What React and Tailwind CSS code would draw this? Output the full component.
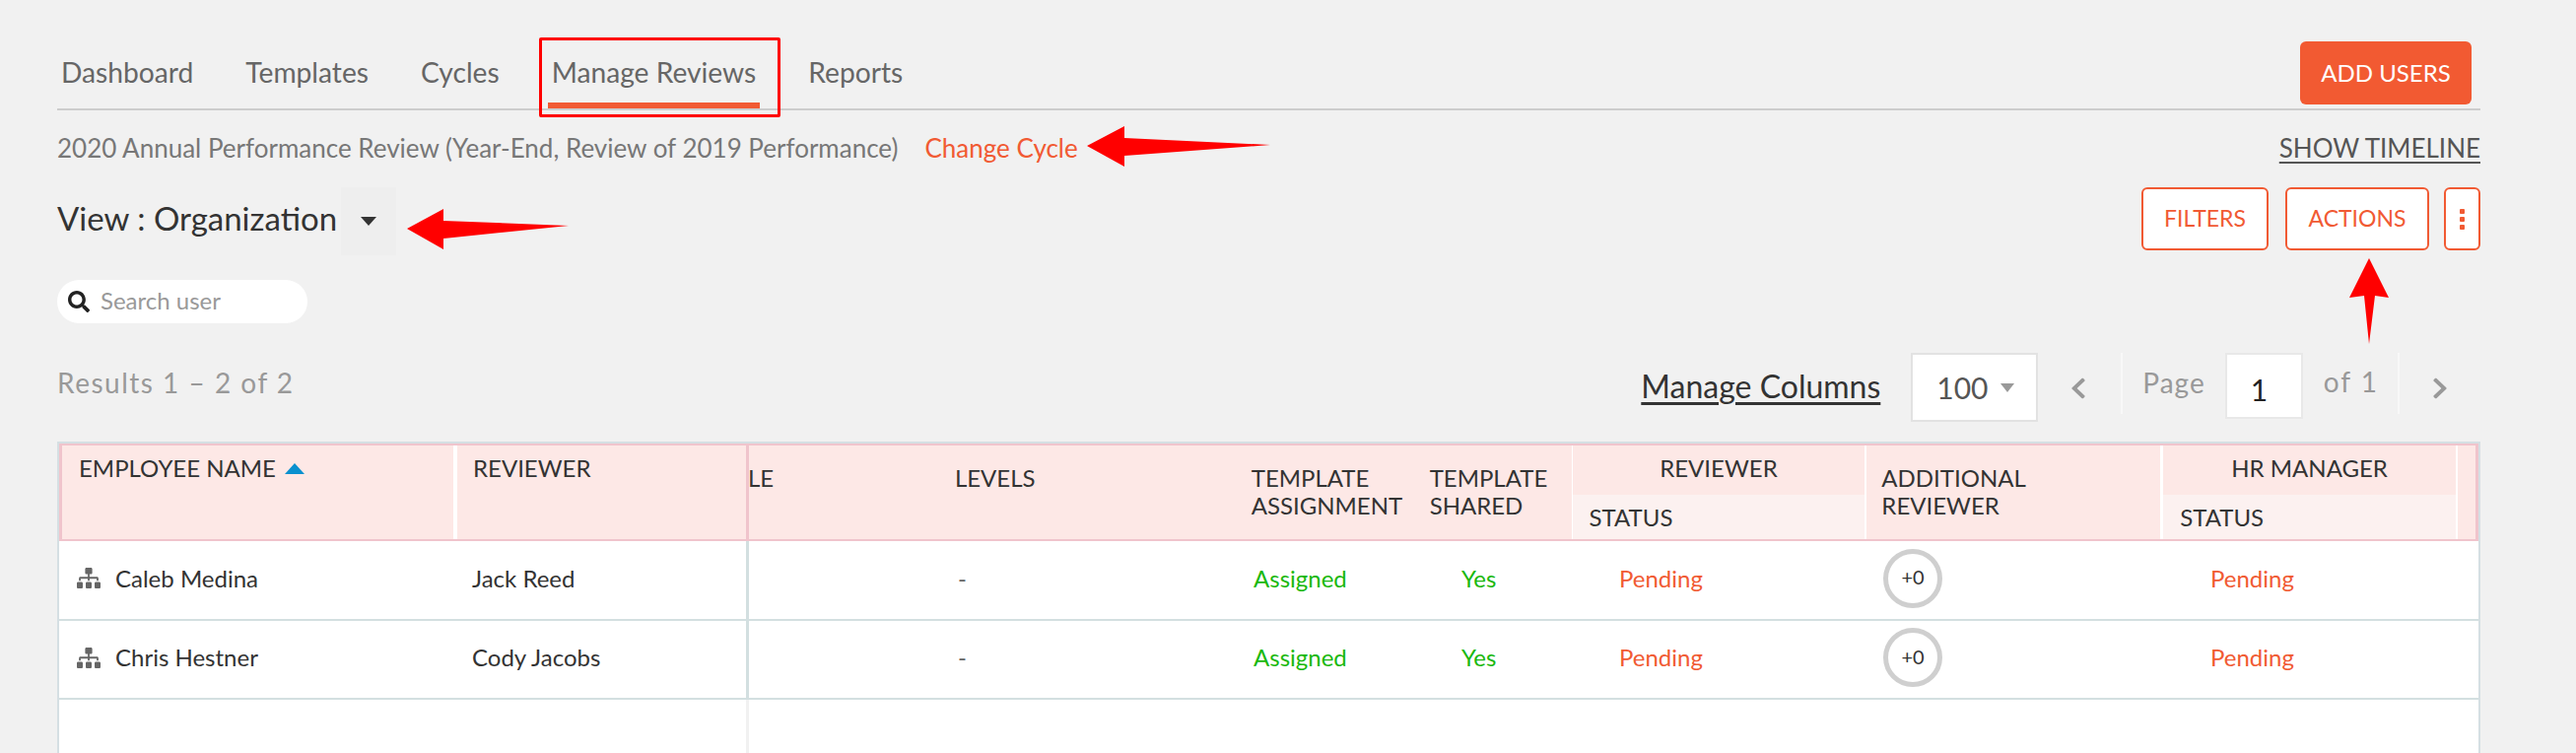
import { FaSitemap, FaSearch, FaChevronLeft, FaChevronRight } from 'react-icons/fa';

const tabs = ['Dashboard', 'Templates', 'Cycles', 'Manage Reviews', 'Reports'];

const people = [
  { name: 'Caleb Medina', reviewer: 'Jack Reed', height: 'h-[81px]' },
  { name: 'Chris Hestner', reviewer: 'Cody Jacobs', height: 'h-[80px]' },
];

// Rote Markierungen aus dem Screenshot, liegen frei über der Seite
function Annotations() {
  return (
    <>
      <div className="absolute left-[547px] top-[38px] w-[245px] h-[81px] border-[3px] border-[#f00] rounded-[2px]" />
      <svg className="absolute left-0 top-0 pointer-events-none" width="2614" height="764">
        <path d="M1103 148 L1141 128 L1141 140 L1289 147 L1141 158 L1141 169 Z" fill="#f00" />
        <path d="M413 232 L450 212 L450 224 L577 229 L450 242 L450 253 Z" fill="#f00" />
        <path d="M2404 262 L2424 302 L2410 300 L2404 349 L2399 300 L2384 302 Z" fill="#f00" />
      </svg>
    </>
  );
}

function Nav() {
  return (
    <div className="flex justify-between h-[112px] border-b-2 border-[#cdcdcd]">
      <div className="flex gap-[45px] h-[110px]">
        {tabs.map((t) => (
          <div
            key={t}
            className={`px-[4px] pt-[53px] text-[28.2px] leading-[40px] text-[#666] border-b-[6px] ${t === 'Manage Reviews' ? 'border-[#f15a33]' : 'border-transparent'}`}
          >
            {t}
          </div>
        ))}
      </div>
      <button className="mt-[42px] mr-[9px] w-[174px] h-[64px] rounded-[6px] bg-[#f25a32] text-white text-[24px]">ADD USERS</button>
    </div>
  );
}

function Outline({ children, className }) {
  return (
    <button className={`h-[64px] flex items-center justify-center bg-white border-2 border-[#f15a33] rounded-[6px] text-[#f15a33] text-[23px] ${className}`}>
      {children}
    </button>
  );
}

function Toolbar() {
  return (
    <>
      <div className="flex justify-between items-center h-[36px] mt-[20px] text-[26px]">
        <div className="flex gap-[27px]">
          <span className="text-[#777]">2020 Annual Performance Review (Year-End, Review of 2019 Performance)</span>
          <span className="text-[#f15a33]">Change Cycle</span>
        </div>
        <span className="text-[#555] underline underline-offset-4">SHOW TIMELINE</span>
      </div>
      <div className="flex justify-between items-start mt-[22px] h-[69px]">
        <div className="flex">
          <div className="w-[283px] whitespace-nowrap text-[33px] leading-[62px] text-[#333]">View : Organization</div>
          <div className="ml-[5px] w-[56px] h-[69px] bg-[#eeeeee] flex items-center justify-center">
            <div className="w-0 h-0 border-x-[8px] border-x-transparent border-t-[9px] border-t-[#333]" />
          </div>
        </div>
        <div className="flex gap-[17px]">
          <Outline className="w-[129px] pb-[2px]">FILTERS</Outline>
          <Outline className="w-[146px] pb-[2px]">ACTIONS</Outline>
          <Outline className="w-[37px] -ml-[2px] flex-col gap-[3px]">
            <span className="w-[5px] h-[5px] bg-[#f15a33] rounded-[1px]" />
            <span className="w-[5px] h-[5px] bg-[#f15a33] rounded-[1px]" />
            <span className="w-[5px] h-[5px] bg-[#f15a33] rounded-[1px]" />
          </Outline>
        </div>
      </div>
      <div className="mt-[25px] w-[254px] h-[44px] bg-white rounded-full flex items-center pl-[11px] gap-[11px]">
        <FaSearch className="w-[22px] h-[22px] text-[#222]" />
        <span className="text-[24px] leading-[30px] pb-[2px] text-[#999]">Search user</span>
      </div>
      <div className="flex justify-between items-start mt-[30px] h-[70px]">
        <div className="mt-[13px] text-[28px] leading-[34px] tracking-[1.5px] text-[#999]">Results 1 – 2 of 2</div>
        <div className="flex items-start pr-[33px]">
          <span className="mt-[14px] text-[32px] leading-[40px] text-[#333] underline underline-offset-4">Manage Columns</span>
          <div className="ml-[31px] w-[129px] h-[70px] bg-white border-2 border-[#e2e2e2] flex items-center pl-[24px] gap-[12px] text-[30px] text-[#555]">
            100
            <div className="w-0 h-0 border-x-[7px] border-x-transparent border-t-[9px] border-t-[#999]" />
          </div>
          <div className="ml-[33px] mt-[24px] w-[16px]"><FaChevronLeft preserveAspectRatio="none" className="w-[16px] h-[24px] text-[#999]" /></div>
          <div className="ml-[35px] w-[2px] h-[62px] bg-[#f8f8f8]" />
          <span className="ml-[20px] mt-[10px] text-[28px] leading-[40px] text-[#999] tracking-[1px]">Page</span>
          <div className="ml-[20px] w-[79px] h-[67px] bg-white border-2 border-[#e8e8e8] pl-[24px] leading-[70px] text-[30px] text-[#222]">1</div>
          <span className="ml-[21px] mt-[9px] text-[28px] leading-[40px] text-[#999] tracking-[2px]">of 1</span>
          <div className="ml-[19px] w-[2px] h-[62px] bg-[#f8f8f8]" />
          <div className="ml-[33px] mt-[24px] w-[16px]"><FaChevronRight preserveAspectRatio="none" className="w-[16px] h-[24px] text-[#999]" /></div>
        </div>
      </div>
    </>
  );
}

function GroupHead({ title }) {
  return (
    <div className="w-[298px] flex flex-col border-l border-white">
      <div className="h-[50px] flex items-center justify-center pb-[4px]">{title}</div>
      <div className="h-[45px] bg-[#fcf1f0] pl-[17px] leading-[46px]">STATUS</div>
    </div>
  );
}

function ReviewTable() {
  return (
    <div className="mt-[20px] h-[316px] bg-white border-t-2 border-x-2 border-[#d5dfe3] text-[#333]">
      <div className="flex">
        {/* fester linker Teil */}
        <div className="w-[700px] shrink-0">
          <div className="flex h-[99px] bg-[#fde8e6] border-y-2 border-l-[3px] border-r-[3px] border-[#f0c4cc] text-[24px] leading-[28px]">
            <div className="w-[401px] border-r-4 border-white pl-[17px] pt-[9px] flex gap-[9px]">
              EMPLOYEE NAME
              <div className="mt-[9px] w-0 h-0 border-x-[10px] border-x-transparent border-b-[11px] border-b-[#0a90cf]" />
            </div>
            <div className="pl-[16px] pt-[9px]">REVIEWER</div>
          </div>
          {people.map((p) => (
            <div key={p.name} className={`flex items-center ${p.height} border-b-2 border-b-[#d3dfe0] border-r-[3px] border-r-[#d3dfe0] text-[24px] pb-[4px]`}>
              <FaSitemap preserveAspectRatio="none" className="ml-[18px] w-[24px] h-[21px] text-[#666] shrink-0" />
              <span className="ml-[15px] w-[362px]">{p.name}</span>
              <span>{p.reviewer}</span>
            </div>
          ))}
          <div className="h-[60px] border-r-[3px] border-[#f1f1f1]" />
        </div>
        <div className="flex-1 min-w-0">
          <div className="flex h-[99px] bg-[#fde8e6] border-y-2 border-[#f0c4cc] text-[24px] leading-[28px] overflow-hidden">
            <div className="w-[190px] pt-[19px] -ml-[1px]">LE</div>
            <div className="w-[301px] pl-[20px] pt-[19px]">LEVELS</div>
            <div className="w-[181px] pl-[20px] pt-[19px]">TEMPLATE ASSIGNMENT</div>
            <div className="w-[164px] pl-[20px] pt-[19px]">TEMPLATE SHARED</div>
            <GroupHead title="REVIEWER" />
            <div className="w-[302px] border-x-2 border-white pl-[15px] pt-[19px]">ADDITIONAL<br />REVIEWER</div>
            <GroupHead title="HR MANAGER" />
            <div className="flex-1 border-l-2 border-white border-r-[3px] border-r-[#f0c4cc] pl-[18px] pt-[19px] overflow-hidden">H</div>
          </div>
          {people.map((p) => (
            <div key={p.name} className={`flex items-center ${p.height} border-b-2 border-[#d3dfe0] text-[24px] pb-[4px]`}>
              <div className="w-[190px]" />
              <div className="w-[301px] pl-[22px] text-[#666]">-</div>
              <div className="w-[181px] pl-[21px] text-[#1ab80e]">Assigned</div>
              <div className="w-[164px] pl-[51px] text-[#1ab80e]">Yes</div>
              <div className="w-[298px] pl-[47px] text-[#f15a33]">Pending</div>
              <div className="w-[302px] pl-[17px]">
                <div className="w-[60px] h-[60px] rounded-full border-[5px] border-[#cfcfcf] flex items-center justify-center text-[20px] pb-[3px]">+0</div>
              </div>
              <div className="pl-[47px] text-[#f15a33]">Pending</div>
            </div>
          ))}
        </div>
      </div>
    </div>
  );
}

export default function App() {
  return (
    <div className="relative h-[764px] overflow-hidden bg-[#f1f1f1] pl-[58px] pr-[97px] font-['Lato',sans-serif]">
      <Nav />
      <Toolbar />
      <ReviewTable />
      <Annotations />
    </div>
  );
}
